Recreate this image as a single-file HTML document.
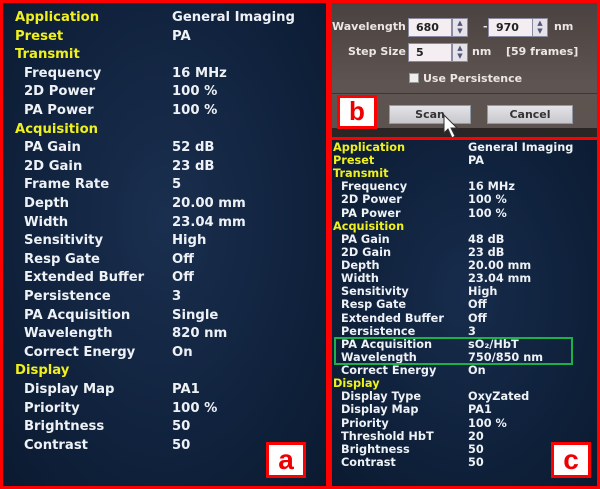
<!DOCTYPE html>
<html><head><meta charset="utf-8"><style>
*{margin:0;padding:0;box-sizing:border-box}
body{width:600px;height:489px;background:#fff;position:relative;overflow:hidden;font-family:"DejaVu Sans","Liberation Sans",sans-serif;font-weight:bold}
.p{position:absolute;border:3px solid #f00;overflow:hidden}
#a{left:0;top:0;width:329px;height:489px;background:radial-gradient(ellipse at 50% 45%,#1a2f4f 0%,#10223d 60%,#0b1a30 100%)}
#c{left:329px;top:137px;width:271px;height:352px;background:radial-gradient(ellipse at 50% 45%,#172c4c 0%,#0f213b 60%,#0b1a30 100%)}
#b{left:329px;top:0;width:271px;height:140px;background:linear-gradient(#4a4240,#5e5451 60%,#5c5350)}
.r{position:absolute;white-space:nowrap;color:#eef2f6}
.y{color:#f0f01e}
#a .r{font-size:13.2px;line-height:18.6px}
#c .r{font-size:11.3px;line-height:13.1px}
.lbl{position:absolute;background:#fff;border:3px solid #f00;color:#e00;font-family:"Liberation Sans",sans-serif;font-weight:bold;text-align:center}
.in{position:absolute;background:#f4eef2;border:1px solid #8a8aa0;height:19px;font-size:11px;color:#222;padding:2px 0 0 7px}
.sp{position:absolute;background:#e6e2ea;border:1px solid #8a8aa0;height:19px;width:16px;font-size:7px;color:#557;text-align:center;line-height:8px}
.t{position:absolute;color:#ece6e4;font-size:11px;white-space:nowrap}
.btn{position:absolute;background:linear-gradient(#e4e4e8,#c8c8cc);border:1px solid #8e9aa8;height:19px;font-size:11px;color:#333;text-align:center;line-height:17px}
</style></head><body>
<div class="p" id="a"></div>
<div class="p" id="b">
 <div style="position:absolute;left:0;top:90px;width:271px;height:1px;background:#3e3634"></div>
 <div style="position:absolute;left:0;top:125px;width:271px;height:12px;background:#2a2626"></div>
 <div class="t" style="left:0;top:17px">Wavelength</div>
 <div class="in" style="left:76px;top:15px;width:44px">680</div><div class="sp" style="left:120px;top:15px">▲<br>▼</div>
 <div class="t" style="left:151px;top:17px">-</div>
 <div class="in" style="left:156px;top:15px;width:45px">970</div><div class="sp" style="left:200px;top:15px">▲<br>▼</div>
 <div class="t" style="left:222px;top:17px">nm</div>
 <div class="t" style="left:16px;top:42px">Step Size</div>
 <div class="in" style="left:76px;top:40px;width:44px">5</div><div class="sp" style="left:120px;top:40px">▲<br>▼</div>
 <div class="t" style="left:140px;top:42px">nm</div>
 <div class="t" style="left:174px;top:42px">[59 frames]</div>
 <div style="position:absolute;left:77px;top:70px;width:10px;height:10px;background:#eee;border:1px solid #999"></div>
 <div class="t" style="left:91px;top:69px">Use Persistence</div>
 <div class="btn" style="left:57px;top:102px;width:82px">Scan</div>
 <div class="btn" style="left:155px;top:102px;width:86px">Cancel</div>
 <svg style="position:absolute;left:111px;top:111px" width="16" height="26"><path d="M1 1 L1 19 L5 15 L9 24 L12 22 L8 14 L14 14 Z" fill="#fff" stroke="#333" stroke-width="1"/></svg>
</div>
<div class="p" id="c"></div>
<div style="position:absolute;left:334px;top:337px;width:239px;height:28px;border:2px solid #1bb04a"></div>
<div class="lbl" style="left:266px;top:442px;width:40px;height:36px;font-size:28px;line-height:29px">a</div>
<div class="lbl" style="left:337px;top:95px;width:40px;height:34px;font-size:26px;line-height:27px">b</div>
<div class="lbl" style="left:551px;top:442px;width:40px;height:36px;font-size:28px;line-height:29px">c</div>
<script>
var A=[["Application","General Imaging",1],["Preset","PA",1],["Transmit","",1],["Frequency","16 MHz"],["2D Power","100 %"],["PA Power","100 %"],["Acquisition","",1],["PA Gain","52 dB"],["2D Gain","23 dB"],["Frame Rate","5"],["Depth","20.00 mm"],["Width","23.04 mm"],["Sensitivity","High"],["Resp Gate","Off"],["Extended Buffer","Off"],["Persistence","3"],["PA Acquisition","Single"],["Wavelength","820 nm"],["Correct Energy","On"],["Display","",1],["Display Map","PA1"],["Priority","100 %"],["Brightness","50"],["Contrast","50"]];
var C=[["Application","General Imaging",1],["Preset","PA",1],["Transmit","",1],["Frequency","16 MHz"],["2D Power","100 %"],["PA Power","100 %"],["Acquisition","",1],["PA Gain","48 dB"],["2D Gain","23 dB"],["Depth","20.00 mm"],["Width","23.04 mm"],["Sensitivity","High"],["Resp Gate","Off"],["Extended Buffer","Off"],["Persistence","3"],["PA Acquisition","sO₂/HbT"],["Wavelength","750/850 nm"],["Correct Energy","On"],["Display","",1],["Display Type","OxyZated"],["Display Map","PA1"],["Priority","100 %"],["Threshold HbT","20"],["Brightness","50"],["Contrast","50"]];
var h="";
A.forEach(function(r,i){var y=6+i*18.6;h+='<div class="r'+(r[2]?' y':'')+'" style="left:'+((r[2]?15:24)-3)+'px;top:'+y+'px">'+r[0]+'</div>';if(r[1])h+='<div class="r" style="left:169px;top:'+y+'px">'+r[1]+'</div>';});
document.getElementById('a').innerHTML=h;
h="";
C.forEach(function(r,i){var y=141+i*13.12-137-3;h+='<div class="r'+(r[2]?' y':'')+'" style="left:'+((r[2]?333:341)-332)+'px;top:'+y+'px">'+r[0]+'</div>';if(r[1])h+='<div class="r" style="left:'+(468-332)+'px;top:'+y+'px">'+r[1]+'</div>';});
document.getElementById('c').innerHTML=h;
</script>
</body></html>
